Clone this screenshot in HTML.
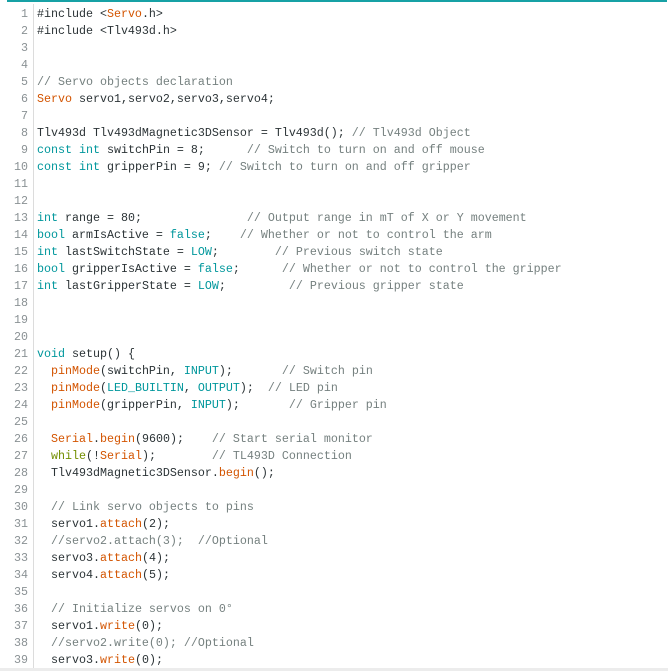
<!DOCTYPE html>
<html><head><meta charset="utf-8"><style>
body{margin:0;width:668px;height:671px;background:#fff;overflow:hidden;position:relative}
.top{position:absolute;left:7px;top:0;width:660px;height:2px;background:#17a1a5}
.bot{position:absolute;left:0;top:668px;width:668px;height:3px;background:#ececec}
.gut{position:absolute;left:33px;top:4px;width:1px;height:664px;background:#dcdcdc}
pre{margin:0;position:absolute;top:6px;left:0;font-family:"Liberation Mono",monospace;font-size:11.67px;line-height:17px;color:#2b3336}
.n{display:inline-block;width:28px;text-align:right;color:#8a9194;margin-right:9px}
.o{color:#d35400}.k{color:#00979c}.c{color:#75807f}.w{color:#728e00}
</style></head><body>
<div class="top"></div><div class="gut"></div>
<pre><span class="n">1</span>#include &lt;<span class="o">Servo</span>.h&gt;
<span class="n">2</span>#include &lt;Tlv493d.h&gt;
<span class="n">3</span>
<span class="n">4</span>
<span class="n">5</span><span class="c">// Servo objects declaration</span>
<span class="n">6</span><span class="o">Servo</span> servo1,servo2,servo3,servo4;
<span class="n">7</span>
<span class="n">8</span>Tlv493d Tlv493dMagnetic3DSensor = Tlv493d(); <span class="c">// Tlv493d Object</span>
<span class="n">9</span><span class="k">const</span> <span class="k">int</span> switchPin = 8;      <span class="c">// Switch to turn on and off mouse</span>
<span class="n">10</span><span class="k">const</span> <span class="k">int</span> gripperPin = 9; <span class="c">// Switch to turn on and off gripper</span>
<span class="n">11</span>
<span class="n">12</span>
<span class="n">13</span><span class="k">int</span> range = 80;               <span class="c">// Output range in mT of X or Y movement</span>
<span class="n">14</span><span class="k">bool</span> armIsActive = <span class="k">false</span>;    <span class="c">// Whether or not to control the arm</span>
<span class="n">15</span><span class="k">int</span> lastSwitchState = <span class="k">LOW</span>;        <span class="c">// Previous switch state</span>
<span class="n">16</span><span class="k">bool</span> gripperIsActive = <span class="k">false</span>;      <span class="c">// Whether or not to control the gripper</span>
<span class="n">17</span><span class="k">int</span> lastGripperState = <span class="k">LOW</span>;         <span class="c">// Previous gripper state</span>
<span class="n">18</span>
<span class="n">19</span>
<span class="n">20</span>
<span class="n">21</span><span class="k">void</span> setup() {
<span class="n">22</span>  <span class="o">pinMode</span>(switchPin, <span class="k">INPUT</span>);       <span class="c">// Switch pin</span>
<span class="n">23</span>  <span class="o">pinMode</span>(<span class="k">LED_BUILTIN</span>, <span class="k">OUTPUT</span>);  <span class="c">// LED pin</span>
<span class="n">24</span>  <span class="o">pinMode</span>(gripperPin, <span class="k">INPUT</span>);       <span class="c">// Gripper pin</span>
<span class="n">25</span>
<span class="n">26</span>  <span class="o">Serial</span>.<span class="o">begin</span>(9600);    <span class="c">// Start serial monitor</span>
<span class="n">27</span>  <span class="w">while</span>(!<span class="o">Serial</span>);        <span class="c">// TL493D Connection</span>
<span class="n">28</span>  Tlv493dMagnetic3DSensor.<span class="o">begin</span>();
<span class="n">29</span>
<span class="n">30</span>  <span class="c">// Link servo objects to pins</span>
<span class="n">31</span>  servo1.<span class="o">attach</span>(2);
<span class="n">32</span>  <span class="c">//servo2.attach(3);  //Optional</span>
<span class="n">33</span>  servo3.<span class="o">attach</span>(4);
<span class="n">34</span>  servo4.<span class="o">attach</span>(5);
<span class="n">35</span>
<span class="n">36</span>  <span class="c">// Initialize servos on 0°</span>
<span class="n">37</span>  servo1.<span class="o">write</span>(0);
<span class="n">38</span>  <span class="c">//servo2.write(0); //Optional</span>
<span class="n">39</span>  servo3.<span class="o">write</span>(0);</pre>
<div class="bot"></div>
</body></html>
